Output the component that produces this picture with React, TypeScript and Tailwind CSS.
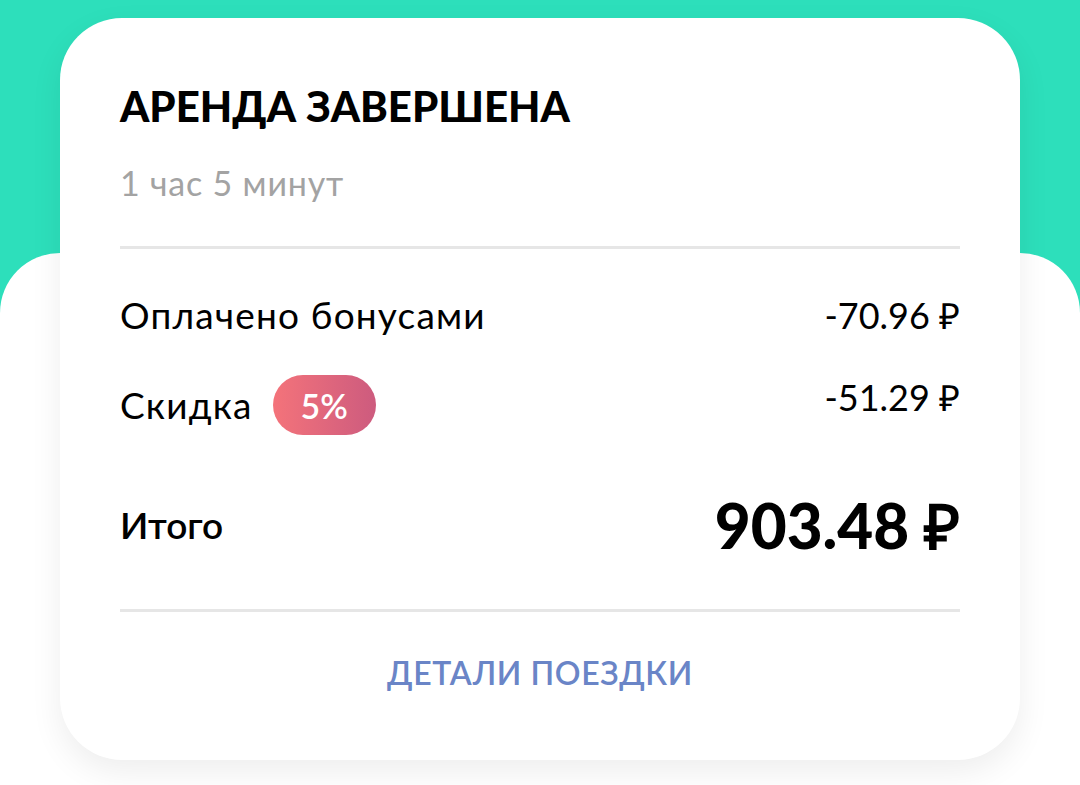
export default function App() {
  return (
    <div className="relative h-[785px] w-[1080px] overflow-hidden bg-[#2ddfbb] font-['Lato',sans-serif]">
      {/* white sheet behind the card */}
      <div className="absolute left-0 right-0 top-[253px] bottom-0 rounded-t-[60px] bg-white" />

      <div className="relative z-10 mx-[60px] mt-[18px] flex h-[742px] flex-col rounded-[62px] bg-white px-[60px] pt-[63px] shadow-[0_12px_32px_rgba(0,0,0,0.07)]">
        <h1 className="text-[42px] font-black leading-[50px] text-black">АРЕНДА ЗАВЕРШЕНА</h1>
        <div className="mt-[32px] text-[34px] leading-[40px] tracking-[0.8px] text-[#a3a3a3]">1 час 5 минут</div>

        <div className="mt-[43px] h-[3px] bg-[#e6e6e6]" />

        <div className="mt-[44px] flex items-start justify-between">
          <span className="text-[37px] leading-[44px] tracking-[1.2px] text-black">Оплачено бонусами</span>
          <span className="text-[36px] leading-[44px] text-black">-70.96 ₽</span>
        </div>

        <div className="mt-[38px] flex items-start justify-between">
          <div className="flex h-[60px] items-center gap-[20px]">
            <span className="text-[37px] leading-[44px] tracking-[1.2px] text-black">Скидка</span>
            <span className="flex h-[60px] w-[103px] items-center justify-center rounded-full bg-gradient-to-r from-[#f4737a] to-[#cd5b7e] text-[34px] font-semibold text-white">
              5%
            </span>
          </div>
          <span className="text-[36px] leading-[44px] text-black">-51.29 ₽</span>
        </div>

        <div className="mt-[58px] flex h-[64px] items-center justify-between">
          <span className="text-[37px] font-semibold leading-[44px] text-black">Итого</span>
          <span className="text-[62px] font-black leading-[64px] text-black">903.48 ₽</span>
        </div>

        <div className="mt-[52px] h-[3px] bg-[#e6e6e6]" />

        <div className="mt-[41px] text-center text-[32px] font-semibold leading-[40px] tracking-[0.6px] text-[#6a85c7]">
          ДЕТАЛИ ПОЕЗДКИ
        </div>
      </div>
    </div>
  );
}
